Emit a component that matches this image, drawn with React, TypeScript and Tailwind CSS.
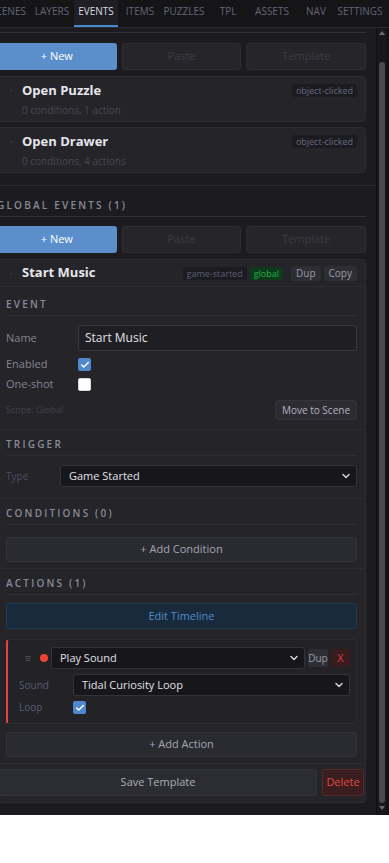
import { ChevronDown, Check } from "lucide-react";

const tabs = ["SCENES", "LAYERS", "EVENTS", "ITEMS", "PUZZLES", "TPL", "ASSETS", "NAV", "SETTINGS"];

function SectionLabel({ text, pt }: { text: string; pt: string }) {
  return (
    <div className={pt}>
      <div className="border-b border-[#2f2f36] pb-[5px] text-[10px] font-semibold leading-[12px] tracking-[0.22em] text-[#8a8a96]">
        {text}
      </div>
    </div>
  );
}

function Checkbox({ checked }: { checked: boolean }) {
  return checked ? (
    <span className="flex h-[13px] w-[13px] items-center justify-center rounded-[2px] bg-[#4f88cc]">
      <Check size={10} strokeWidth={3.5} className="text-white" />
    </span>
  ) : (
    <span className="h-[13px] w-[13px] rounded-[2px] border border-[#d8d8d8] bg-white" />
  );
}

function ButtonRow() {
  return (
    <div className="grid h-[27px] grid-cols-3 gap-[5px] text-[11px]">
      <div className="flex items-center justify-center rounded-[3px] bg-[#5b8fcb] text-white">+ New</div>
      <div className="flex items-center justify-center rounded-[3px] border border-[#2d2d33] bg-[#25252a] text-[#3d3d45]">
        Paste
      </div>
      <div className="flex items-center justify-center rounded-[3px] border border-[#2d2d33] bg-[#25252a] text-[#3d3d45]">
        Template
      </div>
    </div>
  );
}

function EventCard({ title, sub }: { title: string; sub: string }) {
  return (
    <div className="h-[46px] rounded-[4px] border border-[#2c2c32] bg-[#242429] pr-[8px] pt-[5px]">
      <div className="flex h-[16px] items-center">
        <span className="w-[24px] pl-[12px] text-[10px] text-[#55555e]">·</span>
        <span className="text-[13px] font-bold leading-[16px] text-[#e6e6ec]">{title}</span>
        <span className="ml-auto rounded-[3px] bg-[#1b1b20] px-[4px] text-[9px] leading-[13px] text-[#6a6a80]">
          object-clicked
        </span>
      </div>
      <div className="mt-[6px] pl-[24px] text-[10px] leading-[12px] text-[#484852]">{sub}</div>
    </div>
  );
}

export default function App() {
  return (
    <div className="h-[815px] w-[389px] overflow-hidden bg-[#1c1c20] font-['Open_Sans',sans-serif]">
      {/* Tabs */}
      <div className="-ml-[14px] flex h-[28px] w-[403px] border-b border-[#2a2a30] bg-[#151518]">
        {tabs.map((t) => (
          <div
            key={t}
            className={`flex h-[27px] w-[44px] shrink-0 justify-center whitespace-nowrap pt-[5px] text-[10px] leading-[12px] ${
              t === "EVENTS"
                ? "border-b-2 border-[#4a8ad0] bg-[#1e1e24] text-[#d8d8e2]"
                : "text-[#646478]"
            }`}
          >
            {t}
          </div>
        ))}
      </div>

      <div className="flex h-[787px]">
        <div className="w-[376px] shrink-0 overflow-hidden">
          <div className="-ml-[3px] w-[379px] pr-[10px]">
            <div className="h-[4px]" />
            <div className="h-px bg-[#2f2f36]" />
            <div className="mt-[10px]">
              <ButtonRow />
            </div>
            <div className="mt-[6px]">
              <EventCard title="Open Puzzle" sub="0 conditions, 1 action" />
            </div>
            <div className="mt-[5px]">
              <EventCard title="Open Drawer" sub="0 conditions, 4 actions" />
            </div>
            <div className="-mr-[10px] mt-[12px] h-px bg-[#2a2a30]" />

            <SectionLabel text="GLOBAL EVENTS (1)" pt="pt-[13px]" />
            <div className="mt-[9px]">
              <ButtonRow />
            </div>

            {/* Expanded event */}
            <div className="mt-[6px] rounded-[4px] border border-[#2c2c32] bg-[#242429]">
              <div className="flex h-[27px] items-center border-b border-[#2c2c32] pr-[8px]">
                <span className="w-[24px] pl-[12px] text-[10px] text-[#55555e]">·</span>
                <span className="text-[13px] font-bold text-[#e6e6ec]">Start Music</span>
                <span className="ml-auto rounded-[3px] bg-[#1b1b20] px-[4px] text-[9px] leading-[13px] text-[#5e5e76]">
                  game-started
                </span>
                <span className="ml-[3px] rounded-[3px] bg-[#0e3a1b] px-[4px] text-[9px] leading-[13px] text-[#25b04e]">
                  global
                </span>
                <span className="ml-[8px] rounded-[3px] bg-[#2e2e35] px-[5px] text-[10px] leading-[15px] text-[#9a9aa8]">
                  Dup
                </span>
                <span className="ml-[3px] rounded-[3px] bg-[#2e2e35] px-[5px] text-[10px] leading-[15px] text-[#9a9aa8]">
                  Copy
                </span>
              </div>

              {/* EVENT */}
              <div className="border-b border-[#2c2c32] px-[8px] pb-[9px]">
                <SectionLabel text="EVENT" pt="pt-[11px]" />
                <div className="mt-[9px] flex h-[26px] items-center">
                  <span className="w-[72px] text-[11px] text-[#85858f]">Name</span>
                  <div className="flex h-full flex-1 items-center rounded-[3px] border border-[#38383f] bg-[#1e1e23] px-[6px] text-[12px] text-[#e2e2ea]">
                    Start Music
                  </div>
                </div>
                <div className="mt-[7px] flex h-[13px] items-center">
                  <span className="w-[72px] text-[11px] text-[#85858f]">Enabled</span>
                  <Checkbox checked />
                </div>
                <div className="mt-[7px] flex h-[13px] items-center">
                  <span className="w-[72px] text-[11px] text-[#85858f]">One-shot</span>
                  <Checkbox checked={false} />
                </div>
                <div className="mt-[9px] flex h-[20px] items-center justify-between">
                  <span className="text-[9px] text-[#43434b]">Scope: Global</span>
                  <span className="flex h-full w-[82px] items-center justify-center rounded-[3px] border border-[#34343b] bg-[#2c2c32] text-[10px] text-[#b4b4c0]">
                    Move to Scene
                  </span>
                </div>
              </div>

              {/* TRIGGER */}
              <div className="border-b border-[#2c2c32] px-[8px] pb-[11px]">
                <SectionLabel text="TRIGGER" pt="pt-[8px]" />
                <div className="mt-[9px] flex h-[22px] items-center">
                  <span className="w-[54px] text-[10px] text-[#4c4c62]">Type</span>
                  <div className="flex h-full flex-1 items-center justify-between rounded-[3px] border border-[#33333a] bg-[#17171b] pl-[8px] pr-[4px] text-[11px] text-[#e0e0e8]">
                    Game Started
                    <ChevronDown size={12} strokeWidth={3} className="text-[#d0d0d8]" />
                  </div>
                </div>
              </div>

              {/* CONDITIONS */}
              <div className="border-b border-[#2c2c32] px-[8px] pb-[6px]">
                <SectionLabel text="CONDITIONS (0)" pt="pt-[8px]" />
                <div className="mt-[12px] flex h-[25px] items-center justify-center rounded-[3px] border border-[#33333b] bg-[#2a2a31] text-[11px] text-[#a6a6b2]">
                  + Add Condition
                </div>
              </div>

              {/* ACTIONS */}
              <div className="border-b border-[#2c2c32] px-[8px] pb-[6px]">
                <SectionLabel text="ACTIONS (1)" pt="pt-[8px]" />
                <div className="mt-[8px] flex h-[26px] items-center justify-center rounded-[3px] border border-[#1f3c54] bg-[#182a3b] text-[11px] text-[#4d8dcb]">
                  Edit Timeline
                </div>
                <div className="mt-[10px] h-[85px] rounded-[3px] border border-[#2c2c32] border-l-2 border-l-[#e0463b] bg-[#222227] pb-[9px] pl-[11px] pr-[6px] pt-[7px]">
                  <div className="flex h-[22px] items-center">
                    <span className="w-[18px] text-center text-[11px] text-[#55555f]">≡</span>
                    <span className="ml-[3px] h-[8px] w-[8px] rounded-full bg-[#ee4433]" />
                    <div className="ml-[3px] flex h-full flex-1 items-center justify-between rounded-[3px] border border-[#33333a] bg-[#17171b] pl-[8px] pr-[4px] text-[11px] text-[#e0e0e8]">
                      Play Sound
                      <ChevronDown size={12} strokeWidth={3} className="text-[#d0d0d8]" />
                    </div>
                    <span className="ml-[3px] flex h-[18px] w-[20px] items-center justify-center rounded-[2px] bg-[#2e2e35] text-[10px] text-[#9a9aa8]">
                      Dup
                    </span>
                    <span className="ml-[3px] flex h-[18px] w-[19px] items-center justify-center rounded-[2px] bg-[#3a1c1e] text-[11px] text-[#d8413b]">
                      X
                    </span>
                  </div>
                  <div className="mt-[5px] flex h-[22px] items-center">
                    <span className="w-[54px] text-[10px] text-[#5a5a70]">Sound</span>
                    <div className="flex h-full flex-1 items-center justify-between rounded-[3px] border border-[#33333a] bg-[#17171b] pl-[8px] pr-[4px] text-[11px] text-[#e0e0e8]">
                      Tidal Curiosity Loop
                      <ChevronDown size={12} strokeWidth={3} className="text-[#d0d0d8]" />
                    </div>
                  </div>
                  <div className="mt-[5px] flex h-[13px] items-center">
                    <span className="w-[54px] text-[10px] text-[#5a5a70]">Loop</span>
                    <Checkbox checked />
                  </div>
                </div>
                <div className="mt-[8px] flex h-[25px] items-center justify-center rounded-[3px] border border-[#33333b] bg-[#2a2a31] text-[11px] text-[#a6a6b2]">
                  + Add Action
                </div>
              </div>

              {/* Footer */}
              <div className="flex gap-[5px] pb-[6px] pl-[1px] pr-[1px] pt-[5px]">
                <div className="flex h-[27px] flex-1 items-center justify-center rounded-[3px] border border-[#33333b] bg-[#2c2c33] text-[11px] text-[#aeaeba]">
                  Save Template
                </div>
                <div className="flex h-[27px] w-[42px] items-center justify-center rounded-[3px] border border-[#552a2b] bg-[#3a1d1f] text-[11px] text-[#e04848]">
                  Delete
                </div>
              </div>
            </div>
          </div>
        </div>

        {/* Scrollbar */}
        <div className="flex w-[13px] shrink-0 flex-col items-center border-l border-r-[3px] border-l-[#111114] border-r-[#131316] bg-[#18181b] pt-[3px]">
          <span className="h-0 w-0 border-x-[3px] border-b-[4px] border-x-transparent border-b-[#6a6a72]" />
          <span className="mt-[27px] h-[741px] w-[6px] rounded-full bg-[#4a4a50]" />
          <span className="mt-[3px] h-0 w-0 border-x-[3px] border-t-[4px] border-x-transparent border-t-[#6a6a72]" />
        </div>
      </div>
    </div>
  );
}
